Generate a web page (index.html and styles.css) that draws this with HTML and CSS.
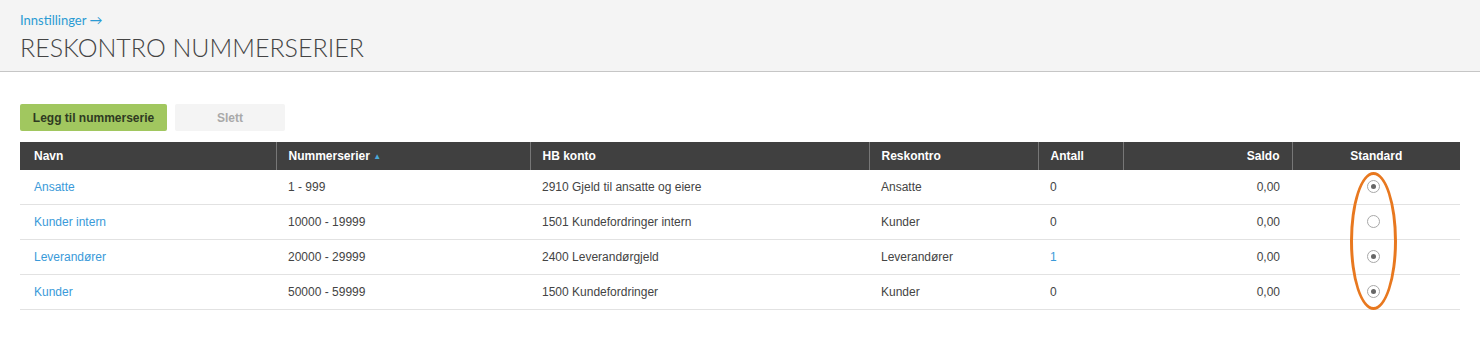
FILE: index.html
```html
<!DOCTYPE html>
<html lang="no">
<head>
    <meta charset="UTF-8">
    <title>Reskontro nummerserier</title>
    <link rel="stylesheet" href="styles.css">
</head>
<body>
    <div class="page-header">
        <a class="crumb" href="#">Innstillinger &rarr;</a>
        <h1>RESKONTRO NUMMERSERIER</h1>
    </div>
    <div class="content">
        <div class="buttons">
            <button type="button" class="btn btn-primary">Legg til nummerserie</button>
            <button type="button" class="btn btn-disabled">Slett</button>
        </div>
        <div class="table-wrap">
            <table class="grid">
                <colgroup>
                    <col style="width:256px">
                    <col style="width:254px">
                    <col style="width:339px">
                    <col style="width:169px">
                    <col style="width:85px">
                    <col style="width:169px">
                    <col style="width:168px">
                </colgroup>
                <thead>
                    <tr>
                        <th>Navn</th>
                        <th>Nummerserier <span class="sort">&#9650;</span></th>
                        <th>HB konto</th>
                        <th>Reskontro</th>
                        <th>Antall</th>
                        <th class="right">Saldo</th>
                        <th class="center">Standard</th>
                    </tr>
                </thead>
                <tbody>
                    <tr>
                        <td><a href="#">Ansatte</a></td>
                        <td>1 - 999</td>
                        <td>2910 Gjeld til ansatte og eiere</td>
                        <td>Ansatte</td>
                        <td>0</td>
                        <td class="right">0,00</td>
                        <td class="center"><span class="radio checked"></span></td>
                    </tr>
                    <tr>
                        <td><a href="#">Kunder intern</a></td>
                        <td>10000 - 19999</td>
                        <td>1501 Kundefordringer intern</td>
                        <td>Kunder</td>
                        <td>0</td>
                        <td class="right">0,00</td>
                        <td class="center"><span class="radio"></span></td>
                    </tr>
                    <tr>
                        <td><a href="#">Leverandører</a></td>
                        <td>20000 - 29999</td>
                        <td>2400 Leverandørgjeld</td>
                        <td>Leverandører</td>
                        <td><a href="#">1</a></td>
                        <td class="right">0,00</td>
                        <td class="center"><span class="radio checked"></span></td>
                    </tr>
                    <tr>
                        <td><a href="#">Kunder</a></td>
                        <td>50000 - 59999</td>
                        <td>1500 Kundefordringer</td>
                        <td>Kunder</td>
                        <td>0</td>
                        <td class="right">0,00</td>
                        <td class="center"><span class="radio checked"></span></td>
                    </tr>
                </tbody>
            </table>
            <div class="highlight"></div>
        </div>
    </div>
</body>
</html>
```

FILE: styles.css
```css
body {
    margin: 0;
    font-family: "Liberation Sans", Arial, sans-serif;
    font-size: 12px;
    color: #444;
    background: #fff;
}
a {
    color: #3a9ad9;
    text-decoration: none;
}
.page-header {
    background: #f4f4f4;
    border-bottom: 1px solid #c6c6c6;
    padding: 12px 20px 0;
    height: 59px;
}
.crumb {
    display: block;
    font-family: Lato, sans-serif;
    font-size: 13px;
    line-height: 16px;
    color: #2b9bd3;
}
h1 {
    margin: 5px 0 0;
    font-family: Lato, sans-serif;
    font-weight: 300;
    font-size: 25px;
    line-height: 28px;
    color: #444;
}
.content {
    padding: 32px 20px 0;
}
.buttons {
    display: flex;
    gap: 8px;
    margin-bottom: 11px;
}
.btn {
    height: 27px;
    border: none;
    border-radius: 2px;
    font-family: "Liberation Sans", Arial, sans-serif;
    font-size: 12px;
    font-weight: bold;
    padding: 0;
    white-space: nowrap;
}
.btn-primary {
    background: #a1c75f;
    color: #2f3a22;
    width: 147px;
}
.btn-disabled {
    background: #f4f4f4;
    color: #a9a9a9;
    width: 110px;
}
.table-wrap {
    position: relative;
    width: 1440px;
}
.grid {
    width: 1440px;
    border-collapse: collapse;
    table-layout: fixed;
}
.grid th {
    background: #404040;
    color: #fff;
    font-weight: bold;
    text-align: left;
    height: 28px;
    padding: 0 12px;
    border-left: 1px solid #777;
}
.grid th:first-child {
    border-left: none;
    padding-left: 14px;
}
.grid td {
    height: 34px;
    padding: 0 12px;
    border-bottom: 1px solid #e2e2e2;
}
.grid td:first-child {
    padding-left: 14px;
}
.grid .right {
    text-align: right;
}
.grid .center {
    text-align: center;
}
.sort {
    color: #4aa8d8;
    font-size: 8px;
    vertical-align: 1px;
}
.radio {
    display: inline-block;
    box-sizing: border-box;
    width: 13px;
    height: 13px;
    border: 1px solid #a8a8a8;
    border-radius: 50%;
    vertical-align: middle;
    position: relative;
    top: -1px;
    left: -3px;
    background: #fff;
}
.radio.checked::after {
    content: "";
    position: absolute;
    left: 3px;
    top: 3px;
    width: 5px;
    height: 5px;
    border-radius: 50%;
    background: #666;
}
.highlight {
    position: absolute;
    left: 1330px;
    top: 30px;
    width: 47px;
    height: 138px;
    border: 3px solid #e8781f;
    border-radius: 50%;
    box-sizing: border-box;
}
```
